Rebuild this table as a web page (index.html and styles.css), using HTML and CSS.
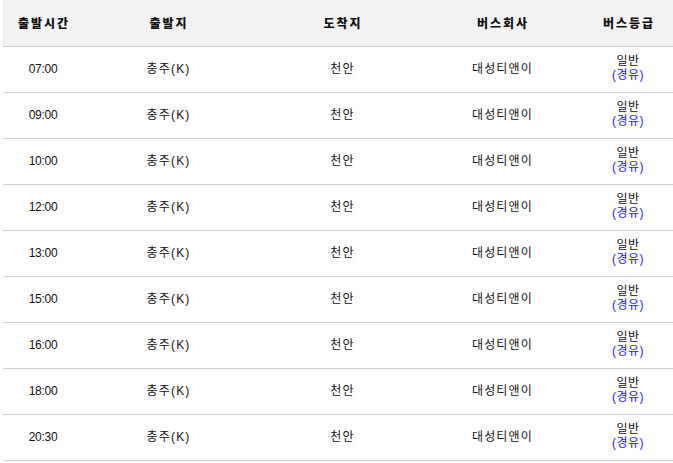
FILE: index.html
```html
<!DOCTYPE html>
<html lang="ko">
<head>
<meta charset="utf-8">
<link rel="stylesheet" href="styles.css">
</head>
<body>
<table class="bus-table">
  <colgroup>
    <col class="c1"><col class="c2"><col class="c3"><col class="c4"><col class="c5">
  </colgroup>
  <thead>
    <tr><th>출발시간</th><th>출발지</th><th>도착지</th><th>버스회사</th><th>버스등급</th></tr>
  </thead>
  <tbody>
    <tr><td class="time">07:00</td><td>충주(K)</td><td>천안</td><td>대성티앤이</td><td class="grade">일반<br><span class="via">(경유)</span></td></tr>
    <tr><td class="time">09:00</td><td>충주(K)</td><td>천안</td><td>대성티앤이</td><td class="grade">일반<br><span class="via">(경유)</span></td></tr>
    <tr><td class="time">10:00</td><td>충주(K)</td><td>천안</td><td>대성티앤이</td><td class="grade">일반<br><span class="via">(경유)</span></td></tr>
    <tr><td class="time">12:00</td><td>충주(K)</td><td>천안</td><td>대성티앤이</td><td class="grade">일반<br><span class="via">(경유)</span></td></tr>
    <tr><td class="time">13:00</td><td>충주(K)</td><td>천안</td><td>대성티앤이</td><td class="grade">일반<br><span class="via">(경유)</span></td></tr>
    <tr><td class="time">15:00</td><td>충주(K)</td><td>천안</td><td>대성티앤이</td><td class="grade">일반<br><span class="via">(경유)</span></td></tr>
    <tr><td class="time">16:00</td><td>충주(K)</td><td>천안</td><td>대성티앤이</td><td class="grade">일반<br><span class="via">(경유)</span></td></tr>
    <tr><td class="time">18:00</td><td>충주(K)</td><td>천안</td><td>대성티앤이</td><td class="grade">일반<br><span class="via">(경유)</span></td></tr>
    <tr><td class="time">20:30</td><td>충주(K)</td><td>천안</td><td>대성티앤이</td><td class="grade">일반<br><span class="via">(경유)</span></td></tr>
  </tbody>
</table>
</body>
</html>
```
FILE: styles.css
```css
html, body {
  margin: 0;
  padding: 0;
  background: #fff;
  overflow: hidden;
}
body {
  padding-left: 3px;
  font-family: "Liberation Sans", "Noto Sans CJK KR", sans-serif;
  color: #111;
}
.bus-table {
  border-collapse: collapse;
  table-layout: fixed;
  width: 680px;
}
.c1 { width: 80px; }
.c2 { width: 170px; }
.c3 { width: 178px; }
.c4 { width: 142px; }
.c5 { width: 110px; }
.bus-table th {
  box-sizing: border-box;
  height: 46px;
  padding: 0 0 0 2px;
  background: #f2f2f2;
  border-bottom: 1px solid #cfcfcf;
  font-family: "Noto Sans CJK KR", sans-serif;
  font-size: 12px;
  font-weight: 900;
  letter-spacing: 2px;
  color: #111;
  text-align: center;
  vertical-align: middle;
}
.bus-table td {
  box-sizing: border-box;
  height: 46px;
  padding: 0 0 0 1px;
  border-bottom: 1px solid #cfcfcf;
  font-size: 12px;
  letter-spacing: 1.2px;
  text-align: center;
  vertical-align: middle;
  color: #111;
  line-height: 14px;
}
.bus-table td.time {
  letter-spacing: -0.3px;
  padding: 0;
}
.bus-table td.grade {
  line-height: 14px;
  letter-spacing: 0.5px;
  padding: 0 0 2px;
}
.via {
  color: #1a1aff;
}
```
